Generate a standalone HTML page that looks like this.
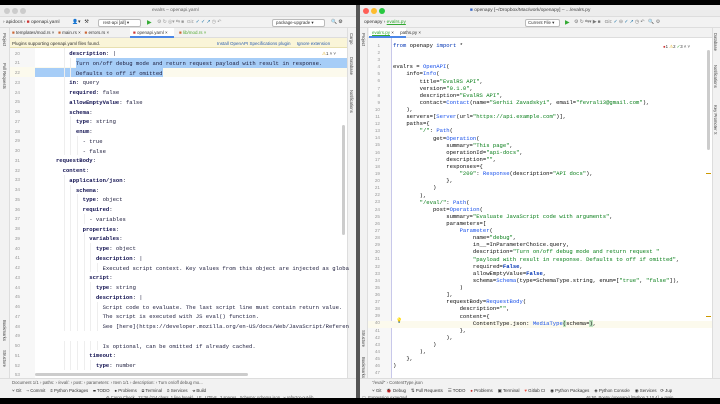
<!DOCTYPE html>
<html><head><meta charset="utf-8"><style>
*{margin:0;padding:0;box-sizing:border-box}
body{width:720px;height:404px;background:#000;position:relative;overflow:hidden;font-family:"Liberation Sans",sans-serif;font-size:5px;color:#222}
.a{position:absolute}
.win{position:absolute;top:5px;height:393px;background:#fff;overflow:hidden}
.mono{font-family:"Liberation Mono",monospace;font-size:5.55px;white-space:pre;color:#1a1a3a}
.ln{position:absolute;font-family:"Liberation Sans",sans-serif;font-size:4.6px;color:#9a9a9a;text-align:right;width:10px}
.s{color:#067d17}.k{color:#101050;font-weight:bold}.f{color:#1750eb}.p{color:#871094}.g{color:#333}
.kb{color:#0033b3;font-weight:bold}
.ui{font-size:4.8px;color:#333;white-space:nowrap}
.tl{width:6px;height:6px;border-radius:50%;position:absolute;top:3px}
.vt{position:absolute;writing-mode:vertical-rl;font-size:4.2px;color:#444;white-space:nowrap}
.sel{background:#a6cdf7}
</style></head><body>

<!-- LEFT WINDOW -->
<div class="win" style="left:0;width:356px">
  <div class="a" style="left:0;top:0;width:356px;height:12px;background:#ececec;border-bottom:1px solid #ddd"></div>
  <div class="tl" style="left:4px;background:#ccc"></div><div class="tl" style="left:12px;background:#ccc"></div><div class="tl" style="left:20px;background:#ccc"></div>
  <div class="a ui" style="left:152px;top:3px;color:#666">evalrs – openapi.yaml</div>
  <div class="a" style="left:0;top:12px;width:356px;height:11px;background:#f2f2f2;border-bottom:1px solid #ddd"></div>
  <div class="a ui" style="left:3px;top:15px">› apidocs ›  <span style="color:#c33">■</span> openapi.yaml</div>
  <div class="a ui" style="left:72px;top:15px">👤▾ &nbsp; ⚒</div>
  <div class="a" style="left:98px;top:14px;width:43px;height:8px;border:1px solid #bbb;border-radius:2px;background:#fff"></div>
  <div class="a ui" style="left:103px;top:15px;font-size:4.4px">rest-api [all] ▾</div>
  <div class="a ui" style="left:147px;top:14px;color:#3a3;font-size:6px">▶</div>
  <div class="a ui" style="left:157px;top:15px;color:#999">⚙ ↻ ◎▾ ⇆ ■ &nbsp;Git: <span style="color:#27a">✓ ✓ ↗</span> ◷ ↶</div>
  <div class="a" style="left:272px;top:14px;width:53px;height:8px;border:1px solid #bbb;border-radius:2px;background:#fff"></div>
  <div class="a ui" style="left:276px;top:15px;font-size:4.4px">package-upgrade ▾</div>
  <div class="a ui" style="left:331px;top:15px">🔍 ⚙</div>
  <div class="a" style="left:0;top:23px;width:347px;height:10px;background:#f2f2f2;border-bottom:1px solid #ddd"></div>
  <div class="a ui" style="left:12px;top:25px;font-size:4.5px"><span style="color:#c63">■</span> templates/mod.rs × &nbsp; <span style="color:#c63">■</span> main.rs × &nbsp; <span style="color:#c63">■</span> errors.rs × &nbsp;</div>
  <div class="a" style="left:130px;top:23px;width:44px;height:10px;background:#fff;border-bottom:2px solid #4a86e8"></div>
  <div class="a ui" style="left:133px;top:25px;font-size:4.5px"><span style="color:#c33">■</span> openapi.yaml ×</div>
  <div class="a ui" style="left:179px;top:25px;font-size:4.5px;color:#5a3"><span style="color:#c63">■</span> lib/mod.rs ×</div>
  <div class="a" style="left:10px;top:33px;width:337px;height:10px;background:#faf5d8;border-bottom:1px solid #e8e0b0"></div>
  <div class="a ui" style="left:12px;top:36px;font-size:4.5px">Plugins supporting openapi.yaml files found.</div>
  <div class="a ui" style="left:217px;top:36px;font-size:4.5px;color:#2a5db0">Install OpenAPI Specifications plugin &nbsp;&nbsp;&nbsp; Ignore extension</div>
  <div class="a" style="left:0;top:23px;width:10px;height:350px;background:#f2f2f2;border-right:1px solid #ddd"></div>
  <div class="vt" style="left:2px;top:28px">Project</div>
  <div class="vt" style="left:2px;top:58px">Pull Requests</div>
  <div class="vt" style="left:2px;top:315px">Bookmarks</div>
  <div class="vt" style="left:2px;top:345px">Structure</div>
  <div class="a" style="left:347px;top:23px;width:9px;height:350px;background:#f2f2f2;border-left:1px solid #ddd"></div>
  <div class="vt" style="left:349px;top:28px">Cargo</div>
  <div class="vt" style="left:349px;top:52px">Database</div>
  <div class="vt" style="left:349px;top:85px">Notifications</div>
  <div class="a" style="left:10px;top:43px;width:25px;height:330px;background:#f7f7f7"></div>
  <div class="a" style="left:10px;top:62px;width:337px;height:10px;background:#fcfaed"></div>
  <div class="a sel" style="left:76px;top:53px;width:271px;height:9.75px"></div>
  <div class="a sel" style="left:35px;top:62.5px;width:128px;height:9.75px"></div>
  <div class="a ui" style="left:322px;top:46px;font-size:4.4px"><span style="color:#d9a000">⚠</span>1 ˄ ˅</div>
  <div class="a" style="left:342px;top:120px;width:3px;height:110px;background:#ccc;border-radius:2px"></div>
  <div class="a" style="left:35px;top:368px;width:213px;height:3px;background:#ccc;border-radius:2px"></div>
  <div id="L"></div>
  <div class="a" style="left:0;top:373px;width:356px;height:20px;background:#f2f2f2;border-top:1px solid #ddd"></div>
  <div class="a ui" style="left:12px;top:375px;font-size:4.3px;color:#555">Document 1/1 › paths: › /eval/: › post: › parameters: › Item 1/1 › description: › Turn on/off debug mo...</div>
  <div class="a ui" style="left:12px;top:383px;font-size:4.4px">⑂ Git &nbsp;&nbsp; ⇢ Commit &nbsp;&nbsp; ◉ Python Packages &nbsp;&nbsp; ☰ TODO &nbsp;&nbsp; ● Problems &nbsp;&nbsp; ▣ Terminal &nbsp;&nbsp; ◉ Services &nbsp;&nbsp; ⚒ Build</div>
  <div class="a ui" style="left:106px;top:389.5px;font-size:4.1px;color:#555">⚙ Cargo Check &nbsp; 22:36 (114 chars, 1 line break) &nbsp; LF &nbsp; UTF-8 &nbsp; 2 spaces &nbsp; Schema: schema.json &nbsp; ⑂ refactor-out-lib</div>
</div>

<!-- RIGHT WINDOW -->
<div class="a" style="left:356px;top:5px;width:4px;height:393px;background:#555"></div>
<div class="win" style="left:360px;width:360px">
  <div class="a" style="left:0;top:0;width:360px;height:12px;background:#ececec;border-bottom:1px solid #ddd"></div>
  <div class="tl" style="left:3px;background:#ff5f57"></div><div class="tl" style="left:11px;background:#febc2e"></div><div class="tl" style="left:19px;background:#28c840"></div>
  <div class="a ui" style="left:110px;top:3px;color:#444"><span style="color:#36c">■</span> openapy [~/Dropbox/Mac/work/openapy] – .../evalrs.py</div>
  <div class="a" style="left:0;top:12px;width:360px;height:11px;background:#f2f2f2;border-bottom:1px solid #ddd"></div>
  <div class="a ui" style="left:4px;top:15px">openapy › <span style="color:#3a3;text-decoration:underline">evalrs.py</span></div>
  <div class="a" style="left:165px;top:14px;width:35px;height:8px;border:1px solid #bbb;border-radius:2px;background:#fff"></div>
  <div class="a ui" style="left:168px;top:15px;font-size:4.4px">Current File ▾</div>
  <div class="a ui" style="left:205px;top:14px;color:#3a3;font-size:6px">▶</div>
  <div class="a ui" style="left:214px;top:15px;color:#777">⚙ ↻ ⇆▾ ▶ ■ &nbsp; Git: <span style="color:#27a">✓</span> ⊖ <span style="color:#27a">✓ ↗</span> ◷ ↶ &nbsp; 🔍 ⚙</div>
  <div class="a" style="left:8px;top:23px;width:344px;height:10px;background:#f2f2f2;border-bottom:1px solid #ddd"></div>
  <div class="a" style="left:9px;top:23px;width:37px;height:10px;background:#fff;border-bottom:2px solid #4a86e8"></div>
  <div class="a ui" style="left:12px;top:25px;font-size:4.5px"><span style="color:#3a3;text-decoration:underline">evalrs.py</span> × &nbsp;&nbsp;&nbsp; paths.py ×</div>
  <div class="a" style="left:0;top:23px;width:8px;height:350px;background:#f2f2f2;border-right:1px solid #ddd"></div>
  <div class="vt" style="left:1px;top:28px">Project</div>
  <div class="vt" style="left:1px;top:325px">Structure</div>
  <div class="vt" style="left:1px;top:352px">Bookmarks</div>
  <div class="a" style="left:352px;top:23px;width:8px;height:350px;background:#f2f2f2;border-left:1px solid #ddd"></div>
  <div class="vt" style="left:353px;top:28px">Database</div>
  <div class="vt" style="left:353px;top:60px">Notifications</div>
  <div class="vt" style="left:353px;top:100px">Key Promoter X</div>
  <div class="a" style="left:8px;top:33px;width:24px;height:340px;background:#f7f7f7"></div>
  <div class="a" style="left:31px;top:33px;width:1px;height:340px;background:#c8c8ea"></div>
  <div class="a" style="left:8px;top:316px;width:344px;height:7px;background:#fcfaed"></div>
  <div class="a ui" style="left:303px;top:39px;font-size:4.3px"><span style="color:#c33">●</span>1 <span style="color:#d9a000">⚠</span>2 <span style="color:#3a3">✓</span>3 ˄ ˅</div>
  <div class="a" style="left:347px;top:45px;width:3px;height:100px;background:#ccc;border-radius:2px"></div>
  <div class="a" style="left:346px;top:168px;width:5px;height:1px;background:#c90"></div>
  <div class="a" style="left:346px;top:311px;width:5px;height:1px;background:#c90"></div>
  <div class="a ui" style="left:36px;top:313px;color:#d9a000;font-size:5px">💡</div>
  <div id="R"></div>
  <div class="a" style="left:0;top:373px;width:360px;height:20px;background:#f2f2f2;border-top:1px solid #ddd"></div>
  <div class="a ui" style="left:12px;top:375px;font-size:4.3px;color:#555">"/eval/" › ContentType.json</div>
  <div class="a ui" style="left:12px;top:383px;font-size:4.4px">⑂ Git &nbsp;&nbsp; 🐞 Debug &nbsp;&nbsp; ⇅ Pull Requests &nbsp;&nbsp; ☰ TODO &nbsp;&nbsp; <span style="color:#c33">●</span> Problems &nbsp;&nbsp; ▣ Terminal &nbsp;&nbsp; <span style="color:#e54">♥</span> Gitlab CI &nbsp;&nbsp; ◉ Python Packages &nbsp;&nbsp; ◈ Python Console &nbsp;&nbsp; ◉ Services &nbsp; ⟳ Jup</div>
  <div class="a ui" style="left:2px;top:389.5px;font-size:4.2px;color:#555">▢ &nbsp;Expression expected</div>
  <div class="a ui" style="left:226px;top:389.5px;font-size:4.1px;color:#555">46:50 &nbsp;Poetry (openapy) [Python 3.10.4] &nbsp;⑂ main</div>
</div>

<script>
(function(){
var L=[
[20,10,'<span class="k">description</span>: |'],
[21,12,'Turn on/off debug mode and return request payload with result in response.'],
[22,12,'Defaults to off if omitted'],
[23,10,'<span class="k">in</span>: query'],
[24,10,'<span class="k">required</span>: false'],
[25,10,'<span class="k">allowEmptyValue</span>: false'],
[26,10,'<span class="k">schema</span>:'],
[27,12,'<span class="k">type</span>: string'],
[28,12,'<span class="k">enum</span>:'],
[29,14,'- true'],[30,14,'- false'],
[31,6,'<span class="k">requestBody</span>:'],
[32,8,'<span class="k">content</span>:'],
[33,10,'<span class="k">application/json</span>:'],
[34,12,'<span class="k">schema</span>:'],
[35,14,'<span class="k">type</span>: object'],
[36,14,'<span class="k">required</span>:'],
[37,16,'- variables'],
[38,14,'<span class="k">properties</span>:'],
[39,16,'<span class="k">variables</span>:'],
[40,18,'<span class="k">type</span>: object'],
[41,18,'<span class="k">description</span>: |'],
[42,20,'Executed script context. Key values from this object are injected as globa'],
[43,16,'<span class="k">script</span>:'],
[44,18,'<span class="k">type</span>: string'],
[45,18,'<span class="k">description</span>: |'],
[46,20,'Script code to evaluate. The last script line must contain return value.'],
[47,20,'The script is executed with JS eval() function.'],
[48,20,'See [here](https://developer.mozilla.org/en-US/docs/Web/JavaScript/Referen'],
[49,0,''],
[50,20,'Is optional, can be omitted if already cached.'],
[51,16,'<span class="k">timeout</span>:'],
[52,18,'<span class="k">type</span>: number'],
[53,0,'']];
var h='';
L.forEach(function(r){var y=43+(r[0]-20)*9.75;
h+='<div class="ln" style="left:10px;top:'+(y+2.5)+'px">'+r[0]+'</div>';
h+='<div class="a mono" style="left:'+(36+r[1]*3.33)+'px;top:'+(y+2)+'px">'+r[2]+'</div>';
for(var i=8;i<r[1];i+=2){h+='<div class="a" style="left:'+(36+i*3.33+1)+'px;top:'+y+'px;width:1px;height:9.75px;background:#eee"></div>';}
});
document.getElementById('L').innerHTML=h;
var S=function(t){return '<span class="s">'+t+'</span>'},F=function(t){return '<span class="f">'+t+'</span>'},K=function(t){return '<span class="kb">'+t+'</span>'};
var R=[
'<span style="color:#0033b3">from</span> openapy <span style="color:#0033b3">import</span> *','','',
'evalrs = '+F('OpenAPI')+'(',
'    info='+F('Info')+'(',
'        title='+S('"EvalRS API"')+',',
'        version='+S('"0.1.0"')+',',
'        description='+S('"EvalRS API"')+',',
'        contact='+F('Contact')+'(name='+S('"Serhii Zavadskyi"')+', email='+S('"fevral13@gmail.com"')+'),',
'    ),',
'    servers=['+F('Server')+'(url='+S('"https://api.example.com"')+')],',
'    paths={',
'        '+S('"/"')+': '+F('Path')+'(',
'            get='+F('Operation')+'(',
'                summary='+S('"This page"')+',',
'                operationId='+S('"api-docs"')+',',
'                description='+S('""')+',',
'                responses={',
'                    '+S('"200"')+': '+F('Response')+'(description='+S('"API docs"')+'),',
'                },',
'            )',
'        ),',
'        '+S('"/eval/"')+': '+F('Path')+'(',
'            post='+F('Operation')+'(',
'                summary='+S('"Evaluate JavaScript code with arguments"')+',',
'                parameters=[',
'                    '+F('Parameter')+'(',
'                        name='+S('"debug"')+',',
'                        in__=InParameterChoice.query,',
'                        description='+S('"Turn on/off debug mode and return request "'),
'                        '+S('"payload with result in response. Defaults to off if omitted"')+',',
'                        required='+K('False')+',',
'                        allowEmptyValue='+K('False')+',',
'                        schema='+F('Schema')+'(type=SchemaType.string, enum=['+S('"true"')+', '+S('"false"')+']),',
'                    )',
'                ],',
'                requestBody='+F('RequestBody')+'(',
'                    description='+S('""')+',',
'                    content={',
'                        ContentType.json: '+F('MediaType')+'<span style="background:#bfe3c0">(</span>schema=<span style="background:#bfe3c0">)</span>,',
'                    },',
'                ),',
'            )',
'        ),',
'    },',
')',''];
h='';
R.forEach(function(t,i){var y=37+i*7.12;
h+='<div class="ln" style="left:10px;top:'+(y+0.8)+'px">'+(i+1)+'</div>';
h+='<div class="a mono" style="left:33px;top:'+y+'px;color:#080808">'+t+'</div>';});
document.getElementById('R').innerHTML=h;
})();
</script>
</body></html>
